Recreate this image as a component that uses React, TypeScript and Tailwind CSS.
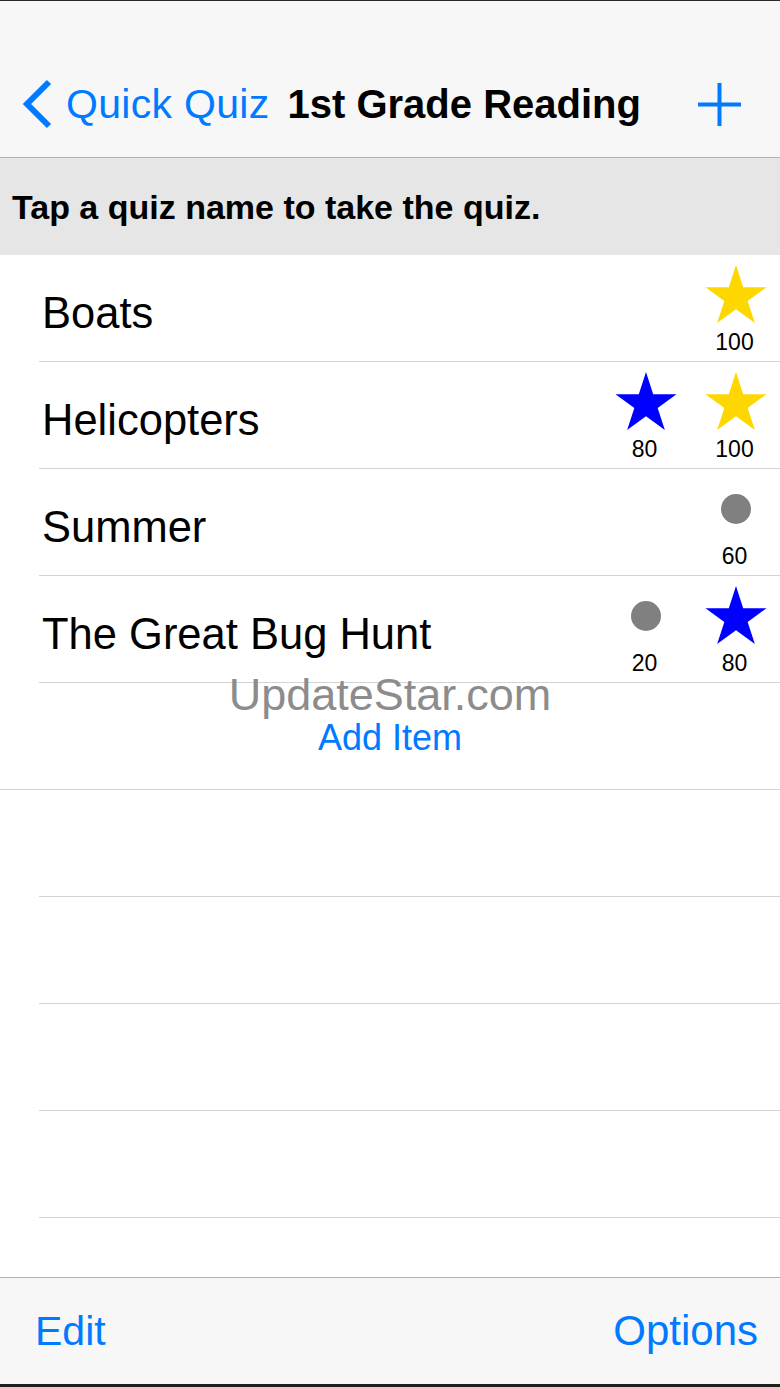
import React from "react"

type Badge = { kind: "gold" | "blue" | "dot"; score: number }

const quizzes: { name: string; badges: Badge[] }[] = [
  { name: "Boats", badges: [{ kind: "gold", score: 100 }] },
  {
    name: "Helicopters",
    badges: [
      { kind: "blue", score: 80 },
      { kind: "gold", score: 100 },
    ],
  },
  { name: "Summer", badges: [{ kind: "dot", score: 60 }] },
  {
    name: "The Great Bug Hunt",
    badges: [
      { kind: "dot", score: 20 },
      { kind: "blue", score: 80 },
    ],
  },
]

function Star({ color }: { color: string }) {
  return (
    <svg width="62" height="58" viewBox="0 0 100 95">
      <polygon
        points="50,0 61.8,36.3 100,36.3 69.1,58.8 80.9,95 50,72.6 19.1,95 30.9,58.8 0,36.3 38.2,36.3"
        fill={color}
      />
    </svg>
  )
}

function BadgeCell({ badge }: { badge: Badge }) {
  return (
    <div className="w-[70px] h-full flex flex-col items-center pt-[10px]">
      <div className="h-[58px] w-[62px] flex items-center justify-center">
        {badge.kind === "gold" && <Star color="#ffd700" />}
        {badge.kind === "blue" && <Star color="#0000ff" />}
        {badge.kind === "dot" && <div className="w-[30px] h-[30px] rounded-full bg-[#808080] mt-[2px]" />}
      </div>
      <div className="mt-[8px] -ml-[3px] text-[23px] leading-none text-black">{badge.score}</div>
    </div>
  )
}

function Row({ children, className = "" }: { children?: React.ReactNode; className?: string }) {
  return (
    <div className="pl-[39px]">
      <div className={`h-[107px] border-b border-[#d4d4d6] flex items-center ${className}`}>{children}</div>
    </div>
  )
}

export default function App() {
  return (
    <div
      className="relative w-[780px] h-[1387px] flex flex-col bg-white overflow-hidden"
      style={{ fontFamily: '"Liberation Sans", Arial, sans-serif' }}
    >
      {/* nav bar */}
      <div className="h-[158px] shrink-0 bg-[#f7f7f7] border-t border-[#2a2a2a] border-b border-b-[#b2b2b2] flex items-center pt-[50px]">
        <div className="flex items-center pl-[20px]">
          <svg width="34" height="50" viewBox="0 0 34 50">
            <polyline points="29,3 7,25 29,47" fill="none" stroke="#007aff" strokeWidth="6" strokeLinejoin="miter" />
          </svg>
          <span className="ml-[12px] text-[41px] leading-none text-[#007aff] tracking-[0.3px]">Quick Quiz</span>
          <span className="ml-[18px] text-[40px] leading-none font-bold text-black">1st Grade Reading</span>
        </div>
        <div className="ml-auto mr-[39px]">
          <svg width="43" height="43" viewBox="0 0 43 43">
            <line x1="21.5" y1="0" x2="21.5" y2="43" stroke="#007aff" strokeWidth="4" />
            <line x1="0" y1="21.5" x2="43" y2="21.5" stroke="#007aff" strokeWidth="4" />
          </svg>
        </div>
      </div>

      {/* hint band */}
      <div className="h-[97px] shrink-0 bg-[#e6e6e6] flex items-center pl-[12px]">
        <span className="text-[34px] leading-none font-bold text-black">Tap a quiz name to take the quiz.</span>
      </div>

      {/* list */}
      <div className="flex-1 flex flex-col">
        {quizzes.map((q) => (
          <Row key={q.name} className="pr-[9px]">
            <span className="pl-[3px] pt-[12px] text-[43.5px] leading-none text-black">{q.name}</span>
            <div className="ml-auto h-full flex gap-[20px]">
              {q.badges.map((b, i) => (
                <BadgeCell key={i} badge={b} />
              ))}
            </div>
          </Row>
        ))}
        <Row className="justify-center -ml-[39px]">
          <span className="text-[36px] leading-none text-[#007aff] pt-[3px]">Add Item</span>
        </Row>
        <Row />
        <Row />
        <Row />
        <Row />
      </div>

      {/* toolbar */}
      <div className="h-[110px] shrink-0 bg-[#f7f7f7] border-t border-[#b2b2b2] border-b-[3px] border-b-[#1f1f1f] flex items-center justify-between pr-[22px] pl-[35px]">
        <span className="text-[41px] leading-none text-[#007aff]">Edit</span>
        <span className="text-[42px] leading-none text-[#007aff]">Options</span>
      </div>

      {/* watermark */}
      <div className="absolute left-0 right-0 top-[672px] text-center text-[45px] leading-none text-[#8c8c8c] pointer-events-none">
        UpdateStar.com
      </div>
    </div>
  )
}
